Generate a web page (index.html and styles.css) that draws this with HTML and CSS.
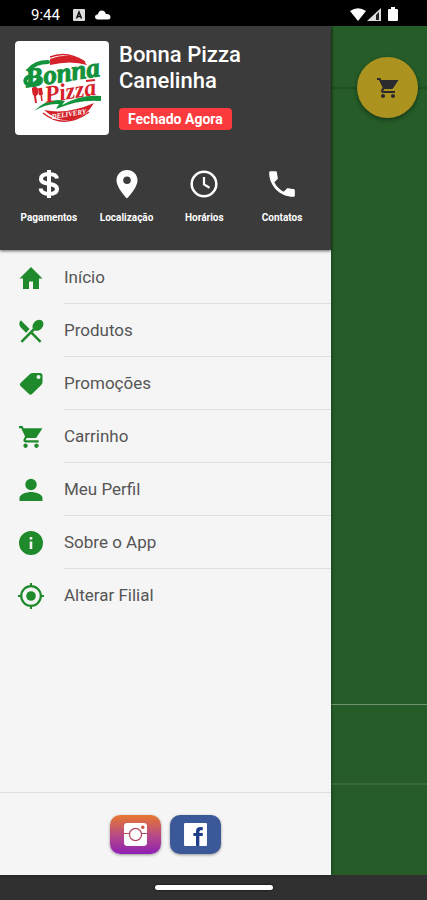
FILE: index.html
```html
<!DOCTYPE html>
<html lang="pt-BR">
<head>
  <meta charset="UTF-8">
  <meta name="viewport" content="width=device-width, initial-scale=1.0">
  <title>Bonna Pizza Canelinha</title>
  <link rel="stylesheet" href="styles.css">
</head>
<body>
  <!-- Status bar -->
  <div class="status-bar">
    <span class="clock">9:44</span>
    <svg class="status-app" viewBox="0 0 12 12"><rect width="12" height="12" rx="1" fill="#ddd"/><path d="M3.500 9.500 6 3l2.500 6.500M4.500 7.500h3" fill="none" stroke="#111" stroke-width="1.500"/></svg>
    <svg class="status-cloud" viewBox="0 0 16 10"><path d="M2.500 9.500a2.500 2.500 0 0 1 0-5C3.500 4.500 3 1 6.500 .5 9.500 .5 10.500 2.500 10.800 4 13 3.500 15.500 4.500 15.500 7q0 2.500-2.500 2.500z" fill="#fff"/></svg>
    <svg class="status-signal" viewBox="0 0 50 16">
      <path d="M1 4Q9-1.500 17 4L9 14z" fill="#fff"/>
      <path d="M32 1v13H18z" fill="#ddd"/>
      <path d="M30 5v8h-3V8z" fill="#222"/>
      <path d="M40 2h2V0h4v2h2q1 0 1 1v10q0 1-1 1h-8q-1 0-1-1V3q0-1 1-1z" fill="#fff"/>
    </svg>
  </div>

  <div class="app">
    <aside class="drawer">
      <header class="drawer-header">
        <div class="store">
          <svg class="logo" viewBox="0 0 94 94" role="img" aria-label="Bonna Pizza Delivery">
            <path d="M35 18Q52 11 68 19L72 24Q56 19 35 24z" fill="#d5222a"/>
            <path d="M35 16Q52 9 70 21" fill="none" stroke="#d5222a" stroke-width="1.500"/>
            <path d="M17 49c-1-4 5-4 6-1 1 4 0 6-2 7l1 7h-2l-1-7q-2-2-2-6z" fill="#d5222a"/>
            <path d="M25 47l1 7" stroke="#d5222a" stroke-width="4"/>
            <path d="M26 53l1 7" stroke="#d5222a" stroke-width="1.500"/>
            <path d="M29 69Q52 74 79 62Q72 75 57 79Q42 81 29 69z" fill="#d5222a"/>
            <path d="M28 72Q49 89 74 71" fill="none" stroke="#d5222a" stroke-width="1.500"/>
            <path d="M19 70Q34 56 50 60L47 64Q66 53 86 55V60Q64 58 41 68L44 63Q32 62 19 70z" fill="#12923b"/>
            <path d="M24 38Q19 46 12 43Q8 39 13 36M14 29Q20 21 33 21" fill="none" stroke="#12923b" stroke-width="4" stroke-linecap="round"/>
            <g transform="rotate(-9 47 43)">
              <text class="logo-bonna" x="49" y="41">Bonna</text>
              <text class="logo-pizza" x="54" y="59">Pizza</text>
              <text class="logo-delivery" x="49" y="76">DELIVERY</text>
            </g>
            <path d="M71 40l9-1" stroke="#d5222a" stroke-width="2"/>
          </svg>
          <div class="store-info">
            <h1>Bonna Pizza Canelinha</h1>
            <span class="badge">Fechado Agora</span>
          </div>
        </div>

        <nav class="shortcuts">
          <a href="#pagamentos">
            <svg viewBox="0 0 30 30"><path d="M23 9.500C22.500 6.500 19.500 5 15 5S7 6.500 7 10c0 7 16 2.500 16 10 0 3.500-3.500 5-8 5s-8-2-8.500-5.500M15 1v28" fill="none" stroke="#fff" stroke-width="4"/></svg>
            Pagamentos
          </a>
          <a href="#localizacao">
            <svg viewBox="0 0 30 30"><path fill-rule="evenodd" d="M15 1C9 1 4.500 5.500 4.500 11.300 4.500 19 15 29.500 15 29.500S25.500 19 25.500 11.300C25.500 5.500 21 1 15 1zm0 6.500a3.800 3.800 0 1 1 0 7.600 3.800 3.800 0 0 1 0-7.600z" fill="#fff"/></svg>
            Localização
          </a>
          <a href="#horarios">
            <svg viewBox="0 0 30 30"><circle cx="15" cy="15" r="12.300" fill="none" stroke="#fff" stroke-width="2.500"/><path d="M15 8v7.500l5.500 3.300" fill="none" stroke="#fff" stroke-width="2.200"/></svg>
            Horários
          </a>
          <a href="#contatos">
            <svg viewBox="1.500 1.500 21 21"><path d="M6.620 10.790c1.440 2.830 3.760 5.140 6.590 6.590l2.200-2.200c.27-.27.67-.36 1.020-.24 1.120.37 2.330.57 3.570.57.55 0 1 .45 1 1V20c0 .55-.45 1-1 1-9.390 0-17-7.610-17-17 0-.55.45-1 1-1h3.500c.55 0 1 .45 1 1 0 1.250.2 2.450.57 3.570.11.35.03.74-.25 1.020z" fill="#fff"/></svg>
            Contatos
          </a>
        </nav>
      </header>

      <nav class="menu">
        <a href="#inicio">
          <svg viewBox="0 0 24 24"><path d="M12 1L.5 12.500H4V23H10V15.500h4V23h6V12.500h3.500z"/></svg>
          <span>Início</span>
        </a>
        <a href="#produtos">
          <svg viewBox="2.500 2.500 19 19"><path d="M8.100 13.340l2.830-2.830L3.910 3.500c-1.560 1.560-1.560 4.090 0 5.660zm6.780-1.810c1.530.71 3.680.21 5.270-1.380 1.910-1.910 2.280-4.650.81-6.120-1.460-1.460-4.200-1.100-6.120.81-1.590 1.590-2.090 3.740-1.380 5.270L3.700 19.870l1.410 1.410L12 14.410l6.880 6.880 1.410-1.410L13.410 13z"/></svg>
          <span>Produtos</span>
        </a>
        <a href="#promocoes">
          <svg viewBox="0 0 24 24"><path fill-rule="evenodd" d="M14 1h7Q23.500 1 23.500 3.500V10Q23.500 12 22 13.200L13 22Q11.500 23.500 10 22L1.500 14Q0 12.500 1.500 11L11 2Q12 1 14 1zm5.500 2a2 2 0 1 0 0 4 2 2 0 0 0 0-4z"/></svg>
          <span>Promoções</span>
        </a>
        <a href="#carrinho">
          <svg viewBox="1 1 22 22"><path d="M7 18c-1.100 0-1.990.9-1.990 2S5.900 22 7 22s2-.9 2-2-.9-2-2-2zM1 2v2h2l3.600 7.590-1.350 2.450c-.16.28-.25.61-.25.96 0 1.100.9 2 2 2h12v-2H7.420c-.14 0-.25-.11-.25-.25l.03-.12.900-1.630h7.450c.75 0 1.410-.41 1.750-1.030L22.500 4H5.210l-.94-2zm16 16c-1.100 0-1.990.9-1.990 2s.89 2 1.990 2 2-.9 2-2-.9-2-2-2z"/></svg>
          <span>Carrinho</span>
        </a>
        <a href="#perfil">
          <svg viewBox="0 0 24 24"><circle cx="12" cy="6.500" r="5.700"/><path d="M.5 23v-3c0-4 7.500-6 11.500-6s11.500 2 11.500 6v3z"/></svg>
          <span>Meu Perfil</span>
        </a>
        <a href="#sobre">
          <svg viewBox="0 0 24 24"><path fill-rule="evenodd" d="M12 0a12 12 0 1 0 0 24 12 12 0 0 0 0-24zm1.300 18h-2.600v-7.500h2.600zm0-9.500h-2.600V6h2.600z"/></svg>
          <span>Sobre o App</span>
        </a>
        <a href="#filial">
          <svg viewBox="0 0 24 24"><circle cx="12" cy="12" r="4.800"/><circle cx="12" cy="12" r="9.800" fill="none" stroke="#1f8a2b" stroke-width="2.200"/><path d="M11-1h2v4h-2zM11 21h2v4h-2zM-1 11h4v2h-4zM21 11h4v2h-4z"/></svg>
          <span>Alterar Filial</span>
        </a>
      </nav>

      <footer class="social">
        <a class="instagram" href="#instagram" aria-label="Instagram">
          <svg viewBox="0 0 24 24"><rect x="1" y="1" width="22" height="22" rx="3" fill="#fff"/><path d="M1 11h5.500M17.500 11H23" stroke="#b64760" stroke-width="1"/><circle cx="12" cy="12" r="5.800" fill="#fff" stroke="#b64760" stroke-width="1.200"/><circle cx="19" cy="5" r="1.600" fill="#cf5444"/></svg>
        </a>
        <a class="facebook" href="#facebook" aria-label="Facebook">
          <svg viewBox="0 0 24 24"><rect x="1" y="1" width="22" height="22" rx="1" fill="#fff"/><path d="M12.500 23v-9.500H10v-3h2.500V9c0-3.500 2-4.500 6.500-4v3c-2.500-.2-3.300.2-3.300 2v.5H19v3h-3.300V23z" fill="#1f3f8c"/></svg>
        </a>
      </footer>
    </aside>

    <!-- Page dimmed behind the drawer -->
    <main class="page">
      <div class="page-top"></div>
      <div class="page-content"></div>
      <div class="page-card"></div>
      <div class="page-bottom"></div>
      <button class="cart-btn" type="button" aria-label="Carrinho">
        <svg viewBox="1 1 22 22"><path d="M7 18c-1.100 0-1.990.9-1.990 2S5.900 22 7 22s2-.9 2-2-.9-2-2-2zM1 2v2h2l3.600 7.590-1.350 2.450c-.16.28-.25.61-.25.96 0 1.100.9 2 2 2h12v-2H7.420c-.14 0-.25-.11-.25-.25l.03-.12.900-1.630h7.450c.75 0 1.410-.41 1.750-1.030L22.500 4H5.210l-.94-2zm16 16c-1.100 0-1.990.9-1.990 2s.89 2 1.990 2 2-.9 2-2-.9-2-2-2z"/></svg>
      </button>
    </main>
  </div>

  <div class="system-nav"><span></span></div>
</body>
</html>
```
FILE: styles.css
```css
:root {
  --green: #1f8a2b;
  --page: #255c28;
  --dark: #3b3b3b;
  --light: #f5f5f5;
}

* {
  box-sizing: border-box;
}

body {
  margin: 0;
  min-height: 100vh;
  display: flex;
  flex-direction: column;
  font-family: Roboto, sans-serif;
  background: var(--page);
}

a {
  color: inherit;
  text-decoration: none;
}

svg {
  display: block;
  flex-shrink: 0;
}

/* Status bar */
.status-bar {
  display: flex;
  align-items: center;
  height: 26px;
  padding: 3px 28px 0 31px;
  background: #000;
  color: #fff;
}

.clock {
  font-size: 15px;
  line-height: 24px;
}

.status-app {
  width: 12px;
  height: 12px;
  margin-left: 13px;
}

.status-cloud {
  width: 16px;
  height: 10px;
  margin-left: 10px;
}

.status-signal {
  width: 50px;
  height: 16px;
  margin-left: auto;
}

.app {
  flex: 1;
  display: flex;
}

/* Drawer */
.drawer {
  width: 77.5%;
  display: flex;
  flex-direction: column;
  background: var(--light);
  box-shadow: 0 0 3px rgba(0,0,0,0.5);
  z-index: 1;
}

.drawer-header {
  height: 224px;
  padding: 15px 10px 0;
  background: var(--dark);
  color: #fff;
  box-shadow: 0 1px 3px rgba(0,0,0,0.6);
}

.store {
  display: flex;
  gap: 10px;
  padding: 0 5px;
}

.logo {
  width: 94px;
  height: 94px;
  background: #fff;
  border-radius: 4px;
}

.logo text {
  font-family: "Liberation Serif", serif;
  font-style: italic;
  font-weight: 700;
  text-anchor: middle;
}

.logo .logo-bonna {
  font-size: 27px;
  fill: #12923b;
  stroke: #12923b;
}

.logo .logo-pizza {
  font-size: 24px;
  fill: #d5222a;
}

.logo .logo-delivery {
  font-size: 7px;
  fill: #fff;
}

.store-info {
  flex: 1;
  padding-top: 1px;
}

h1 {
  margin: 0 0 14px;
  max-width: 160px;
  font-size: 22px;
  line-height: 26px;
  font-weight: 500;
}

.badge {
  display: inline-block;
  padding: 0 9px;
  border-radius: 4px;
  background: #fb3a3d;
  font-size: 14px;
  line-height: 22px;
  font-weight: 700;
}

.shortcuts {
  display: grid;
  grid-template-columns: repeat(4, 1fr);
  margin-top: 34px;
}

.shortcuts a {
  display: flex;
  flex-direction: column;
  align-items: center;
  gap: 13px;
  font-size: 10px;
  line-height: 12px;
  font-weight: 700;
}

.shortcuts svg {
  width: 30px;
  height: 30px;
}

.menu {
  flex: 1;
  padding-top: 1px;
}

.menu a {
  display: flex;
  align-items: center;
  height: 53px;
  padding-left: 19px;
  gap: 21px;
}

.menu svg {
  width: 24px;
  height: 24px;
  fill: var(--green);
  overflow: visible;
}

.menu span {
  flex: 1;
  border-bottom: 1px solid #dedede;
  color: #555;
  font-size: 17px;
  line-height: 52px;
}

.menu a:last-child span {
  border-bottom-color: transparent;
}

.social {
  display: flex;
  justify-content: center;
  gap: 9px;
  height: 83px;
  padding-top: 22px;
  border-top: 1px solid #dedede;
}

.social a {
  display: flex;
  align-items: center;
  justify-content: center;
  width: 51px;
  height: 39px;
  border-radius: 10px;
  box-shadow: 0 1px 3px rgba(0,0,0,0.4);
}

.social svg {
  width: 25px;
  height: 25px;
}

.instagram {
  background: linear-gradient(#e8772e, #b4488a 55%, #8f20b4);
}

.facebook {
  background: #3b5998;
}

/* Page behind */
.page {
  position: relative;
  flex: 1;
  display: flex;
  flex-direction: column;
}

.page-top {
  height: 63px;
  border-bottom: 2px solid #20501f;
}

.page-content {
  flex: 1;
}

.page-card {
  height: 81px;
  border-top: 1px solid #6f926f;
  border-bottom: 2px solid #3b6b3d;
}

.page-bottom {
  height: 90px;
}

.cart-btn {
  position: absolute;
  top: 31px;
  right: 9px;
  width: 61px;
  height: 61px;
  padding: 0;
  display: flex;
  align-items: center;
  justify-content: center;
  border: none;
  border-radius: 50%;
  background: #ac921f;
  box-shadow: 0 2px 4px rgba(0,0,0,0.4);
}

.cart-btn svg {
  width: 22px;
  height: 22px;
  fill: #2b2a2e;
}

/* System navigation */
.system-nav {
  display: flex;
  align-items: center;
  justify-content: center;
  height: 25px;
  background: #303030;
}

.system-nav span {
  width: 118px;
  height: 5px;
  border-radius: 3px;
  background: #fff;
  box-shadow: 0 0 2px #000;
}
```
